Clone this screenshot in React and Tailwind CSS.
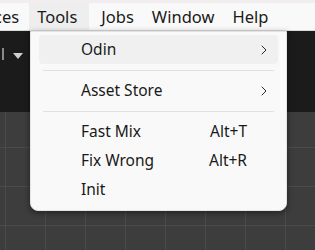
import { ChevronRight } from 'lucide-react';

const MenuRow = ({ label, shortcut, sub, active }) => (
    <div
        className={`mx-[8px] h-[29px] flex items-center rounded-[4px] pl-[42px] pr-[6px] ${
            active ? 'bg-[#f0f0f0]' : ''
        }`}
    >
        <span className="flex-1">{label}</span>
        {shortcut && <span className="mr-[25px]">{shortcut}</span>}
        {sub && <ChevronRight className="w-[16px] h-[16px] text-[#1a1a1a]" strokeWidth={1.4} />}
    </div>
);

const Separator = () => (
    <div className="h-[12px] flex items-center px-[12px]">
        <div className="h-px w-full bg-[#e0e0e0]" />
    </div>
);

export default function App() {
    return (
        <div className="relative w-[315px] h-[250px] overflow-hidden bg-[#3d3d3d] font-['Noto_Sans',sans-serif] text-[15.5px] text-[#1a1a1a]">
            {/* Menu bar */}
            <div className="h-[31px] bg-[#f9f9f9] border-t-[3px] border-[#f2eeef] border-b border-b-[#d8d8d8] flex items-stretch text-[16.5px]">
                <div className="flex items-center pt-[2px] pr-[10px] -ml-[6px]">ces</div>
                <div className="flex items-center pt-[2px] pl-[8px] pr-[12px] bg-[#eeeeee]">Tools</div>
                <div className="flex items-center pt-[2px] pl-[12px] pr-[9px]">Jobs</div>
                <div className="flex items-center pt-[2px] px-[9px]">Window</div>
                <div className="flex items-center pt-[2px] px-[9px]">Help</div>
            </div>

            {/* Toolbar */}
            <div className="h-[81px] bg-[#1b1b1b] relative">
                <div className="absolute left-[2px] top-[17px] w-[2px] h-[12px] bg-[#8a8a8a]" />
                <div className="absolute left-[13px] top-[22px] w-0 h-0 border-l-[5px] border-r-[5px] border-t-[6px] border-l-transparent border-r-transparent border-t-[#d0d0d0]" />
            </div>

            {/* Grid */}
            <div className="h-[138px] bg-[#3d3d3d] bg-[linear-gradient(to_right,#4a4a4a_1px,transparent_1px),linear-gradient(to_bottom,#4a4a4a_1px,transparent_1px)] bg-[size:40px_39px] bg-[position:5px_35px]" />

            {/* Dropdown */}
            <div className="absolute left-[30px] top-[31px] w-[257px] h-[180px] bg-[#f9f9f9] rounded-b-[8px] border border-[#e3e3e3] shadow-[0_2px_6px_rgba(0,0,0,0.45)] pt-[3px]">
                <MenuRow label="Odin" sub active />
                <Separator />
                <MenuRow label="Asset Store" sub />
                <Separator />
                <MenuRow label="Fast Mix" shortcut="Alt+T" />
                <MenuRow label="Fix Wrong" shortcut="Alt+R" />
                <MenuRow label="Init" />
            </div>
        </div>
    );
}
